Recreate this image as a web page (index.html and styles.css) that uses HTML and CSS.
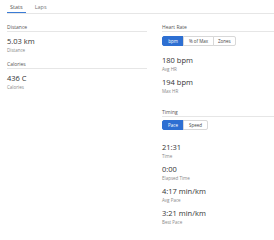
FILE: index.html
```html
<!DOCTYPE html>
<html>
<head>
  <title>Activity Stats</title>
  <link rel="stylesheet" href="styles.css">
</head>
<body>
  <div class="tabs">
    <div class="tab active">Stats</div>
    <div class="tab">Laps</div>
  </div>
  <div class="columns">
    <div class="col left">
      <div class="section">
        <div class="section-title">Distance</div>
        <div class="stat">
          <div class="value">5.03 km</div>
          <div class="label">Distance</div>
        </div>
      </div>
      <div class="section">
        <div class="section-title">Calories</div>
        <div class="stat">
          <div class="value">436 C</div>
          <div class="label">Calories</div>
        </div>
      </div>
    </div>
    <div class="col right">
      <div class="section">
        <div class="section-title">Heart Rate</div>
        <div class="toggle">
          <button class="on">bpm</button>
          <button class="wide">% of Max</button>
          <button>Zones</button>
        </div>
        <div class="stat">
          <div class="value">180 bpm</div>
          <div class="label">Avg HR</div>
        </div>
        <div class="stat">
          <div class="value">194 bpm</div>
          <div class="label">Max HR</div>
        </div>
      </div>
      <div class="section timing">
        <div class="section-title">Timing</div>
        <div class="toggle">
          <button class="on">Pace</button>
          <button class="mid">Speed</button>
        </div>
        <div class="stat">
          <div class="value">21:31</div>
          <div class="label">Time</div>
        </div>
        <div class="stat">
          <div class="value">0:00</div>
          <div class="label">Elapsed Time</div>
        </div>
        <div class="stat">
          <div class="value">4:17 min/km</div>
          <div class="label">Avg Pace</div>
        </div>
        <div class="stat">
          <div class="value">3:21 min/km</div>
          <div class="label">Best Pace</div>
        </div>
      </div>
    </div>
  </div>
</body>
</html>
```

FILE: styles.css
```css
body {
  font-family: "Open Sans", sans-serif;
  background: #fff;
  color: #333;
  margin: 0;
  padding: 0 0 0 7px;
  overflow: hidden;
}
.tabs {
  display: flex;
  gap: 6px;
  border-bottom: 1px solid #e6e6e6;
  height: 13px;
}
.tab {
  font-size: 5.5px;
  color: #777;
  padding: 1px 3px 0;
  line-height: 12px;
}
.tab.active {
  color: #555;
  border-bottom: 1px solid #3a7bd5;
}
.columns {
  display: flex;
  gap: 15px;
  padding-top: 10px;
}
.col.left {
  width: 140px;
}
.col.right {
  flex: 1;
}
.section {
  margin-bottom: 15px;
}
.left .section {
  margin-bottom: 8px;
}
.section-title {
  font-size: 5px;
  color: #555;
  line-height: 7px;
  border-bottom: 1px solid #e6e6e6;
}
.stat {
  margin-top: 5px;
  margin-bottom: 3px;
}
.left .stat {
  margin-top: 4px;
}
.value {
  font-size: 7.5px;
  line-height: 11px;
  color: #333;
}
.label {
  font-size: 4.5px;
  line-height: 6px;
  color: #888;
}
.toggle {
  display: flex;
  margin-top: 4px;
  margin-bottom: 9px;
}
.timing .toggle {
  margin-top: 3px;
  margin-bottom: 12px;
}
.toggle button {
  font-family: "Open Sans", sans-serif;
  font-size: 4.5px;
  height: 10px;
  padding: 0 4px;
  background: #fff;
  color: #444;
  border: 1px solid #d8d8d8;
  margin-left: -1px;
  min-width: 22px;
}
.toggle button:first-child {
  margin-left: 0;
  border-radius: 2px 0 0 2px;
}
.toggle button:last-child {
  border-radius: 0 2px 2px 0;
}
.toggle button.wide {
  min-width: 31px;
}
.toggle button.mid {
  min-width: 25px;
}
.toggle button.on {
  background: #2d6fd2;
  border-color: #2d6fd2;
  color: #fff;
}
```
